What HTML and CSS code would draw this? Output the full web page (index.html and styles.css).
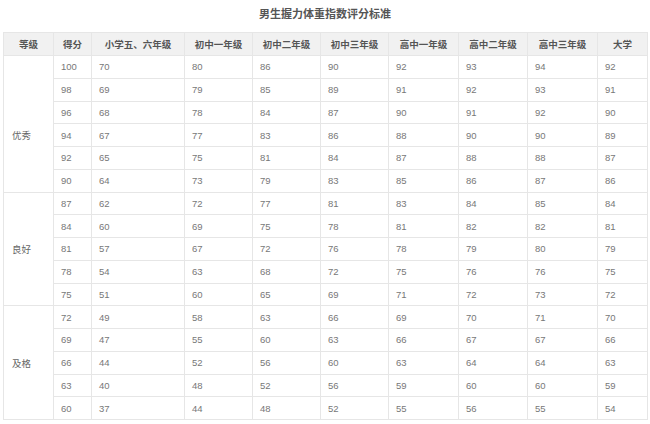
FILE: index.html
```html
<!DOCTYPE html>
<html lang="zh">
<head>
<meta charset="utf-8">
<link rel="stylesheet" href="styles.css">
</head>
<body>
<div class="page">
  <div class="title">男生握力体重指数评分标准</div>
  <table class="score">
    <colgroup>
      <col class="c-grade"><col class="c-score"><col class="c-p"><col class="c-j1"><col class="c-j2"><col class="c-j3"><col class="c-h1"><col class="c-h2"><col class="c-h3"><col class="c-u">
    </colgroup>
    <thead>
      <tr><th>等级</th><th>得分</th><th>小学五、六年级</th><th>初中一年级</th><th>初中二年级</th><th>初中三年级</th><th>高中一年级</th><th>高中二年级</th><th>高中三年级</th><th>大学</th></tr>
    </thead>
    <tbody>
      <tr><td class="grade shift" rowspan="6">优秀</td><td>100</td><td>70</td><td>80</td><td>86</td><td>90</td><td>92</td><td>93</td><td>94</td><td>92</td></tr>
      <tr><td>98</td><td>69</td><td>79</td><td>85</td><td>89</td><td>91</td><td>92</td><td>93</td><td>91</td></tr>
      <tr><td>96</td><td>68</td><td>78</td><td>84</td><td>87</td><td>90</td><td>91</td><td>92</td><td>90</td></tr>
      <tr><td>94</td><td>67</td><td>77</td><td>83</td><td>86</td><td>88</td><td>90</td><td>90</td><td>89</td></tr>
      <tr><td>92</td><td>65</td><td>75</td><td>81</td><td>84</td><td>87</td><td>88</td><td>88</td><td>87</td></tr>
      <tr><td>90</td><td>64</td><td>73</td><td>79</td><td>83</td><td>85</td><td>86</td><td>87</td><td>86</td></tr>
      <tr><td class="grade" rowspan="5">良好</td><td>87</td><td>62</td><td>72</td><td>77</td><td>81</td><td>83</td><td>84</td><td>85</td><td>84</td></tr>
      <tr><td>84</td><td>60</td><td>69</td><td>75</td><td>78</td><td>81</td><td>82</td><td>82</td><td>81</td></tr>
      <tr><td>81</td><td>57</td><td>67</td><td>72</td><td>76</td><td>78</td><td>79</td><td>80</td><td>79</td></tr>
      <tr><td>78</td><td>54</td><td>63</td><td>68</td><td>72</td><td>75</td><td>76</td><td>76</td><td>75</td></tr>
      <tr><td>75</td><td>51</td><td>60</td><td>65</td><td>69</td><td>71</td><td>72</td><td>73</td><td>72</td></tr>
      <tr><td class="grade" rowspan="5">及格</td><td>72</td><td>49</td><td>58</td><td>63</td><td>66</td><td>69</td><td>70</td><td>71</td><td>70</td></tr>
      <tr><td>69</td><td>47</td><td>55</td><td>60</td><td>63</td><td>66</td><td>67</td><td>67</td><td>66</td></tr>
      <tr><td>66</td><td>44</td><td>52</td><td>56</td><td>60</td><td>63</td><td>64</td><td>64</td><td>63</td></tr>
      <tr><td>63</td><td>40</td><td>48</td><td>52</td><td>56</td><td>59</td><td>60</td><td>60</td><td>59</td></tr>
      <tr><td>60</td><td>37</td><td>44</td><td>48</td><td>52</td><td>55</td><td>56</td><td>55</td><td>54</td></tr>
    </tbody>
  </table>
</div>
</body>
</html>
```
FILE: styles.css
```css
html, body {
  margin: 0;
  padding: 0;
  background: #ffffff;
}
body {
  font-family: "Liberation Sans", "Noto Sans CJK SC", sans-serif;
  color: #777777;
}
.page {
  width: 650px;
  height: 424px;
  overflow: hidden;
}
.title {
  height: 32px;
  line-height: 28px;
  text-align: center;
  font-size: 11px;
  font-weight: bold;
  color: #555555;
}
.score {
  margin-left: 3px;
  width: 644px;
  border-collapse: collapse;
  table-layout: fixed;
  font-size: 9.5px;
}
.c-grade { width: 50px; }
.c-score { width: 38px; }
.c-p { width: 93px; }
.c-j1 { width: 68px; }
.c-j2 { width: 68px; }
.c-j3 { width: 68px; }
.c-h1 { width: 70px; }
.c-h2 { width: 69px; }
.c-h3 { width: 70px; }
.c-u { width: 50px; }
.score th,
.score td {
  border: 1px solid #e6e6e6;
  padding: 0 0 0 7px;
  text-align: left;
  white-space: nowrap;
  overflow: hidden;
}
.score th {
  height: 22px;
  background: #f1f1f1;
  color: #555555;
  font-weight: bold;
  text-align: center;
  padding: 0;
}
.score td {
  height: 21.75px;
}
.score td.grade {
  color: #666666;
  vertical-align: middle;
  padding-left: 8px;
}
.score td.shift {
  padding-top: 23px;
}
```
